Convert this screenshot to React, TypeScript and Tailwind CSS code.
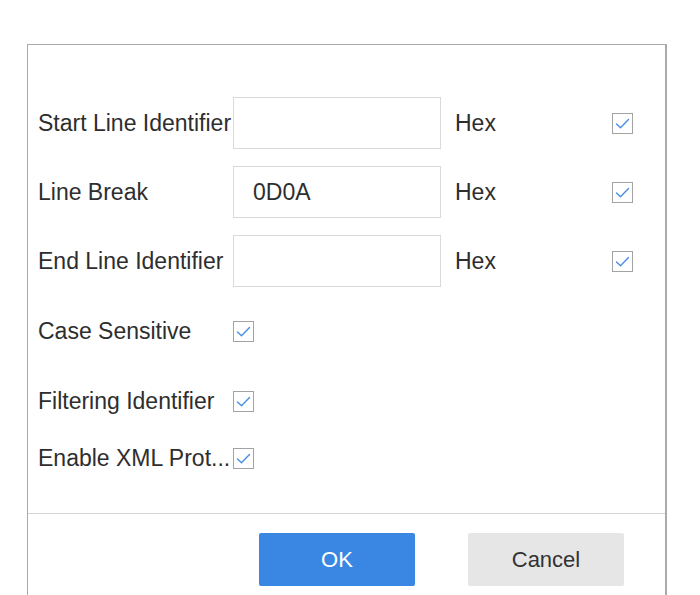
import React from "react"

const font = { fontFamily: '"Liberation Sans", Arial, sans-serif' }

function Check() {
  return (
    <span className="flex h-[21px] w-[21px] shrink-0 items-center justify-center border-[1.5px] border-[#a3a3a3] bg-white">
      <svg width="21" height="21" viewBox="0 0 21 21" fill="none" className="-m-[1.5px]">
        <path d="M4.5 11 L8.5 14.8 L16.5 6.5" stroke="#4a8fe6" strokeWidth="1.4" strokeLinecap="round" strokeLinejoin="round" />
      </svg>
    </span>
  )
}

function HexRow({ label, value, className }: { label: string; value?: string; className: string }) {
  return (
    <div className={`flex h-[52px] items-center ${className}`}>
      <span className="w-[195px] shrink-0 whitespace-nowrap">{label}</span>
      <div className="flex h-[52px] w-[208px] shrink-0 items-center border border-[#d9d9d9] bg-white pl-[19px]">
        {value}
      </div>
      <span className="ml-[14px] w-[157px] shrink-0">Hex</span>
      <Check />
    </div>
  )
}

function CheckRow({ label, className }: { label: string; className: string }) {
  return (
    <div className={`flex h-[52px] items-center ${className}`}>
      <span className="w-[195px] shrink-0 whitespace-nowrap">{label}</span>
      <Check />
    </div>
  )
}

export default function App() {
  return (
    <div className="h-[595px] w-[700px] overflow-hidden bg-white pl-[27px] pt-[44px] text-[23px] text-[#2e2e2e]" style={font}>
      <div className="h-[620px] w-[640px] border-l border-r-2 border-t border-[#aaaaaa]">
        {/* form body */}
        <div className="flex flex-col pl-[10px]">
          <HexRow label="Start Line Identifier" className="mt-[52px]" />
          <HexRow label="Line Break" value="0D0A" className="mt-[17px]" />
          <HexRow label="End Line Identifier" className="mt-[17px]" />
          <CheckRow label="Case Sensitive" className="mt-[18px]" />
          <CheckRow label="Filtering Identifier" className="mt-[18px]" />
          <CheckRow label="Enable XML Prot..." className="mt-[5px]" />
        </div>

        {/* footer */}
        <div className="mt-[29px] flex justify-end gap-[53px] border-t border-[#d4d4d4] pr-[41px] pt-[19px] text-[22px]">
          <button className="h-[53px] w-[156px] rounded-[2px] bg-[#3987e3] text-white">OK</button>
          <button className="h-[53px] w-[156px] rounded-[2px] bg-[#e6e6e6] text-[#333]">Cancel</button>
        </div>
      </div>
    </div>
  )
}
